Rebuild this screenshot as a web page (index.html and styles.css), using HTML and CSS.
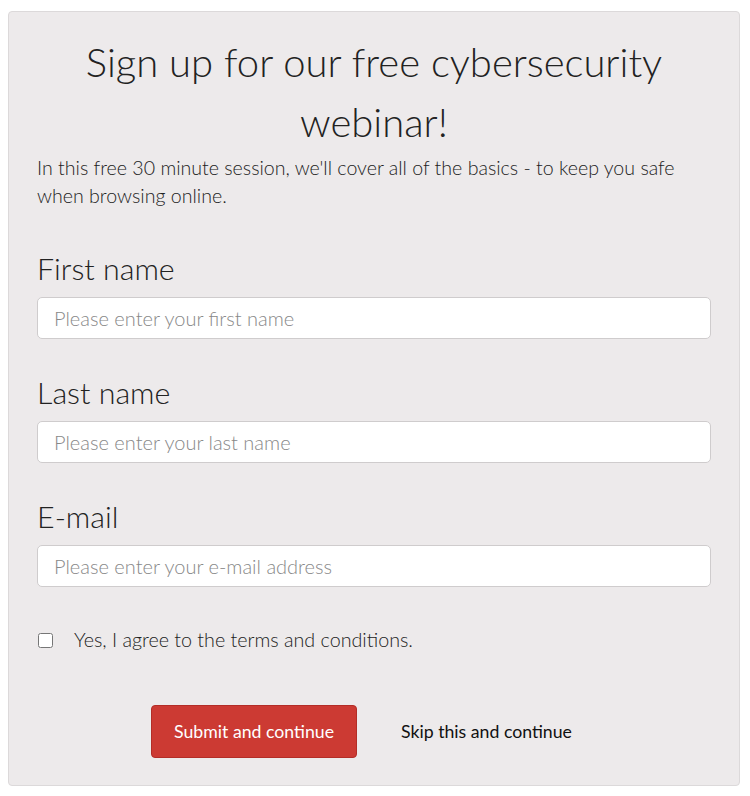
FILE: index.html
```html
<!DOCTYPE html>
<html lang="en">
<head>
  <meta charset="UTF-8">
  <title>Cybersecurity webinar</title>
  <meta name="viewport" content="width=device-width, initial-scale=1">
  <link rel="stylesheet" href="styles.css">
</head>
<body>
  <div class="card">
    <h1>Sign up for our free cybersecurity webinar!</h1>
    <p class="intro">In this free 30 minute session, we'll cover all of the basics - to keep you safe when browsing online.</p>

    <form class="signup">
      <label class="field">
        <span class="field-label">First name</span>
        <input type="text" placeholder="Please enter your first name">
      </label>
      <label class="field">
        <span class="field-label">Last name</span>
        <input type="text" placeholder="Please enter your last name">
      </label>
      <label class="field">
        <span class="field-label">E-mail</span>
        <input type="email" placeholder="Please enter your e-mail address">
      </label>

      <label class="agree">
        <input type="checkbox">
        <span>Yes, I agree to the terms and conditions.</span>
      </label>

      <div class="actions">
        <button type="button" class="submit">Submit and continue</button>
        <a href="#" class="skip">Skip this and continue</a>
      </div>
    </form>
  </div>
</body>
</html>
```

FILE: styles.css
```css
body {
  margin: 0;
  background: #fff;
  font-family: Lato, 'Open Sans', sans-serif;
  color: #222;
}
.card {
  margin: 11px 10px 10px 8px;
  padding: 0 28px 27px;
  background: #edeaeb;
  border: 1px solid #dcd9da;
  border-radius: 4px;
}
h1 {
  margin: 0;
  padding-top: 20px;
  font-size: 40px;
  font-weight: 300;
  line-height: 60px;
  text-align: center;
}
.intro {
  margin: 2px 0 0;
  font-size: 19.6px;
  font-weight: 300;
  line-height: 28px;
}
.signup {
  margin-top: 41px;
}
.field {
  display: flex;
  flex-direction: column;
  margin-bottom: 36px;
}
.field-label {
  font-size: 30.4px;
  font-weight: 300;
  line-height: 34px;
  margin-bottom: 12px;
}
.field input {
  height: 42px;
  box-sizing: border-box;
  padding: 0 16px;
  border: 1px solid #cfcccd;
  border-radius: 5px;
  background: #fff;
  font-family: inherit;
  font-size: 20px;
  font-weight: 300;
}
.field input::placeholder {
  color: #888;
}
.agree {
  display: flex;
  align-items: center;
  gap: 21px;
  margin-top: 39px;
  font-size: 19.7px;
  font-weight: 300;
  line-height: 28px;
}
.agree input {
  margin: 0 0 0 1px;
  width: 15px;
  height: 15px;
}
.actions {
  display: flex;
  justify-content: center;
  align-items: center;
  gap: 44px;
  margin-top: 51px;
  padding-right: 25px;
}
.submit {
  height: 53px;
  padding: 0 22px;
  background: #cc3a33;
  border: 1px solid #b32d27;
  border-radius: 4px;
  color: #fff;
  font-family: inherit;
  font-size: 17.7px;
  font-weight: 400;
}
.skip {
  color: #111;
  text-decoration: none;
  font-size: 17.7px;
}
```
